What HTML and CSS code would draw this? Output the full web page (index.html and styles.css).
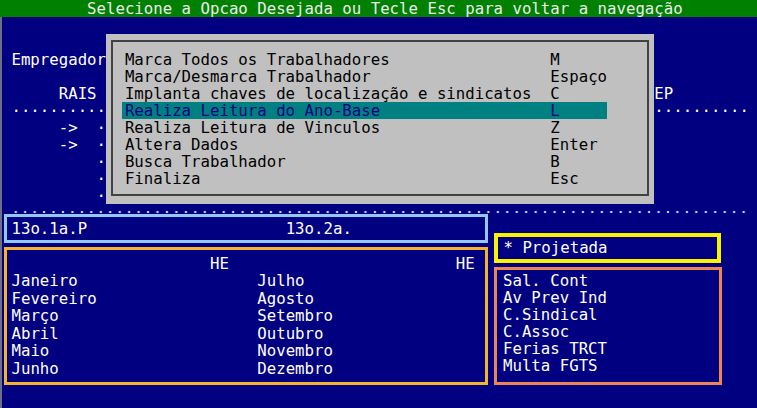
FILE: index.html
```html
<!DOCTYPE html>
<html lang="pt-BR">
<head>
  <meta charset="UTF-8" />
  <title>RAIS - Seleção de Opção</title>
  <link rel="stylesheet" href="styles.css">
</head>
<body>
  <div class="titlebar">Selecione a Opcao Desejada ou Tecle Esc para voltar a navegação</div>

  <div class="screen">
    <div class="backdrop">
      <pre class="fields left">


 Empregador

      RAIS
 ··········
      ->  ·
      ->  ·
          ·
          ·
          ·</pre>
      <pre class="fields right">




CEP
 ··········</pre>

      <!-- popup menu drawn over the form -->
      <div class="menu">
        <ul>
          <li><span>Marca Todos os Trabalhadores</span><span>M</span></li>
          <li><span>Marca/Desmarca Trabalhador</span><span>Espaço</span></li>
          <li><span>Implanta chaves de localização e sindicatos</span><span>C</span></li>
          <li class="selected"><span>Realiza Leitura do Ano-Base</span><span>L</span></li>
          <li><span>Realiza Leitura de Vinculos</span><span>Z</span></li>
          <li><span>Altera Dados</span><span>Enter</span></li>
          <li><span>Busca Trabalhador</span><span>B</span></li>
          <li><span>Finaliza</span><span>Esc</span></li>
        </ul>
      </div>
    </div>

    <div class="rule"></div>

    <div class="panels">
      <div class="col-left">
        <div class="box totals">
          <span>13o.1a.P</span>
          <span>13o.2a.</span>
        </div>
        <div class="box months">
          <div class="he">HE</div><div class="he">HE</div>
          <div>Janeiro</div><div>Julho</div>
          <div>Fevereiro</div><div>Agosto</div>
          <div>Março</div><div>Setembro</div>
          <div>Abril</div><div>Outubro</div>
          <div>Maio</div><div>Novembro</div>
          <div>Junho</div><div>Dezembro</div>
        </div>
      </div>
      <div class="col-right">
        <div class="box projetada">* Projetada</div>
        <div class="box rubricas">
          <div>Sal. Cont</div>
          <div>Av Prev Ind</div>
          <div>C.Sindical</div>
          <div>C.Assoc</div>
          <div>Ferias TRCT</div>
          <div>Multa FGTS</div>
        </div>
      </div>
    </div>
  </div>
</body>
</html>
```

FILE: styles.css
```css
* {
  box-sizing: border-box;
}
body {
  margin: 0;
  width: 757px;
  height: 408px;
  overflow: hidden;
  background: #000080;
  color: #fff;
  font-family: 'DejaVu Sans Mono', 'Liberation Mono', monospace;
  font-size: 15.71px;
  line-height: 17px;
}
pre {
  margin: 0;
  font: inherit;
}
.titlebar {
  height: 17px;
  background: #008000;
  color: #ececec;
  padding-left: calc(9ch + 2px);
  white-space: pre;
}
.screen {
  height: 391px;
  border-left: 2px solid #6e6e84;
}
.backdrop {
  position: relative;
  display: flex;
  height: 187px;
}
.fields {
  color: #fff;
}
.fields.left {
  width: 11ch;
}
.fields.right {
  margin-left: 57ch;
}
.menu {
  position: absolute;
  left: 11ch;
  top: 17px;
  width: 58ch;
  height: 170px;
  background: #c0c0c0;
  color: #000;
}
.menu::before {
  content: '';
  position: absolute;
  inset: 6px 5px 8px 5px;
  border: 2px solid #424242;
}
.menu ul {
  position: relative;
  list-style: none;
  margin: 0;
  padding: 17px 0 0 calc(2ch - 3px);
}
.menu li {
  display: grid;
  grid-template-columns: 45ch 6ch;
  width: calc(51ch + 3px);
  padding-left: 3px;
  white-space: pre;
}
.menu li.selected {
  background: #008080;
  color: #000080;
}
.rule {
  height: 10px;
  margin-left: 1ch;
  width: 78ch;
  background-image: radial-gradient(circle at 50% 8px, #c8d0ff 1px, transparent 1.6px);
  background-size: 1ch 10px;
}
.panels {
  display: grid;
  grid-template-columns: 490px 1fr;
}
.col-left {
  padding-left: 2px;
}
.col-right {
  padding-left: 2px;
}
.box {
  border: 3px solid;
}
.box div,
.box span {
  white-space: pre;
}
.totals {
  display: grid;
  grid-template-columns: 29ch auto;
  width: 484px;
  height: 29px;
  padding: 0 4.5px;
  line-height: 23px;
  border-color: #90c8f8;
}
.months {
  display: grid;
  grid-template-columns: 26ch 1fr;
  width: 484px;
  height: 138px;
  margin-top: 4px;
  padding: 5px 4.5px;
  border-color: #f4b42c;
}
.months .he {
  padding-left: 21ch;
}
.projetada {
  width: 227px;
  height: 30px;
  margin-top: 19px;
  padding-left: 5.5px;
  line-height: 22px;
  white-space: pre;
  border: 4px solid #f8f400;
}
.rubricas {
  width: 228px;
  height: 118px;
  margin-top: 4px;
  padding: 2px 6px;
  border-color: #ee8452;
}
```
